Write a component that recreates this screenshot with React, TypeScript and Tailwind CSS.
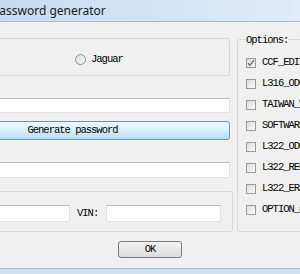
const rows = [
  { label: 'CCF_EDIT', checked: true },
  { label: 'L316_ODO', checked: false },
  { label: 'TAIWAN_V', checked: false },
  { label: 'SOFTWARE', checked: false },
  { label: 'L322_ODO', checked: false },
  { label: 'L322_REG', checked: false },
  { label: 'L322_ERA', checked: false },
  { label: 'OPTION_#', checked: false },
]

function CheckBox({ checked }: { checked: boolean }) {
  return (
    <div className="w-[10px] h-[10px] shrink-0 border border-[#9a9a9a] bg-gradient-to-br from-[#dcdcdc] to-[#fafafa] flex items-center justify-center">
      {checked && (
        <svg width="8" height="8" viewBox="0 0 8 8">
          <path d="M1 4.2 L3 6.3 L7 1.2" fill="none" stroke="#6a6a6a" strokeWidth="1.3" />
        </svg>
      )}
    </div>
  )
}

function TextBox({ className }: { className: string }) {
  return <div className={`bg-white border border-[#dfe3e8] border-t-[#b9bcc2] ${className}`} />
}

export default function App() {
  return (
    <div className="w-[300px] h-[274px] overflow-hidden bg-[#f0f0f0] flex flex-col font-['Liberation_Mono',monospace] text-[10.5px] tracking-[-1px] text-black">
      {/* title bar */}
      <div className="h-[22px] shrink-0 bg-gradient-to-r from-[#c6dbf1] to-[#e0ecf8] border-b border-[#a9b9c9] flex items-center">
        <span className="ml-[-8px] font-['Noto_Sans',sans-serif] text-[12px] tracking-normal text-[#1a1a1a]">
          Password generator
        </span>
      </div>

      <div className="flex shrink-0">
        {/* left column */}
        <div className="w-[233px] shrink-0 flex flex-col">
          <div className="mt-[16px] w-[230px] h-[38px] pt-[5px] border border-l-0 border-[#d6d9dc] rounded-r-[3px] flex items-center">
            <div className="ml-[75px] w-[11px] h-[11px] rounded-full border border-[#8f9091] bg-gradient-to-br from-[#dadada] to-[#f8f8f8]" />
            <span className="ml-[5px]">Jaguar</span>
          </div>

          <TextBox className="mt-[22px] w-[230px] h-[15px] border-l-0" />

          <div className="mt-[8px] ml-[-85px] w-[315px] h-[19px] rounded-[3px] border border-[#6b93b4] bg-gradient-to-b from-[#eef8fd] via-[#d8effb] to-[#b5dcf2] flex items-center justify-center">
            Generate password
          </div>

          <TextBox className="mt-[22px] w-[230px] h-[16px] border-l-0" />

          <div className="mt-[13px] w-[233px] h-[41px] pt-[4px] border border-l-0 border-[#d6d9dc] rounded-r-[3px] flex items-center">
            <TextBox className="w-[70px] h-[17px] border-l-0" />
            <span className="ml-[7px]">VIN:</span>
            <TextBox className="ml-[8px] w-[115px] h-[17px]" />
          </div>
        </div>

        {/* options group */}
        <div className="ml-[4px] mt-[17px] w-[80px] shrink-0 h-[193px] border border-r-0 border-[#d6d9dc] rounded-l-[3px] relative">
          <span className="absolute left-[7px] top-[-7px] bg-[#f0f0f0] px-[1px]">Options:</span>
          <div className="pt-[12px] flex flex-col">
            {rows.map((r) => (
              <div key={r.label} className="h-[21px] flex items-center pl-[8px]">
                <CheckBox checked={r.checked} />
                <span className="ml-[6px] whitespace-nowrap">{r.label}</span>
              </div>
            ))}
          </div>
        </div>
      </div>

      {/* bottom */}
      <div className="mt-[9px] ml-[118px] w-[64px] h-[17px] shrink-0 rounded-[3px] border border-[#7a7a7a] bg-gradient-to-b from-[#f4f4f4] to-[#dcdcdc] flex items-center justify-center">
        OK
      </div>
      <div className="mt-[10px] flex-1 border-t border-[#a7bfd4] bg-[#cfe1f1]" />
    </div>
  )
}
